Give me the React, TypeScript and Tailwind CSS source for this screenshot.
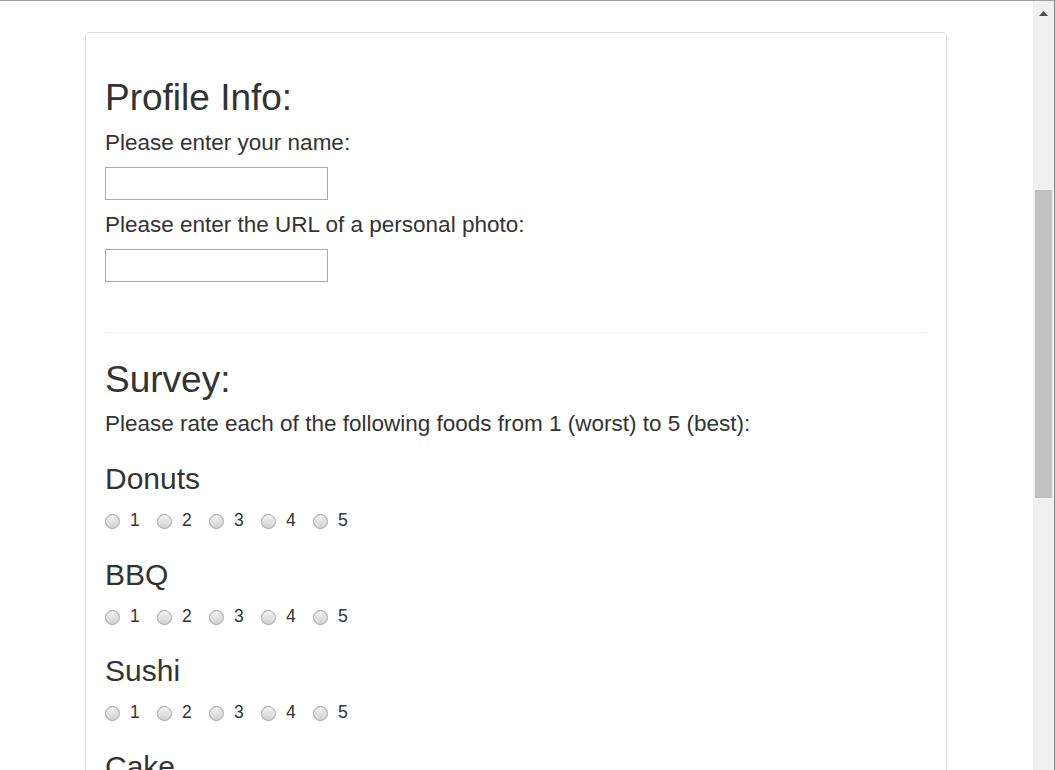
import React from "react";

const foods = ["Donuts", "BBQ", "Sushi", "Cake", "Pizza"];
const ratings = [1, 2, 3, 4, 5];

function RatingRow({ food }: { food: string }) {
  return (
    <div className="mt-[25px] first:mt-[22px]">
      <h3 className="text-[30px] leading-[33px]">{food}</h3>
      <div className="mt-[13px] flex h-[25px] text-[17.5px] leading-[25px]">
        {ratings.map((n) => (
          <label key={n} className="flex w-[52px] items-start">
            <span
              role="radio"
              aria-checked="false"
              className="mt-[6px] block h-[15px] w-[15px] shrink-0 rounded-full border border-[#a3a3a3] bg-linear-to-b from-[#f3f3f3] to-[#d2d2d2]"
            />
            <span className="ml-[10px]">{n}</span>
          </label>
        ))}
      </div>
    </div>
  );
}

function Scrollbar() {
  return (
    <div className="flex w-[22px] shrink-0">
      <div className="flex w-[21px] flex-col bg-[#f0f0f0]">
        <div className="flex h-[25px] items-center justify-center">
          <svg width="9" height="5" viewBox="0 0 9 5">
            <path d="M4.5 0 L9 5 L0 5 Z" fill="#505050" />
          </svg>
        </div>
        <div className="mx-[2px] mt-[164px] h-[308px] bg-[#c1c1c1]" />
      </div>
      <div className="w-px bg-[#8a8a8a]" />
    </div>
  );
}

export default function App() {
  return (
    <div className="flex h-[770px] flex-col overflow-hidden bg-white font-['Liberation_Sans',Arial,sans-serif] text-[#333]">
      <div className="h-px shrink-0 bg-[#a0a0a0]" />
      <div className="flex min-h-0 flex-1">
        <main className="min-w-0 flex-1 overflow-hidden pt-[31px]">
          <div className="ml-[85px] w-[862px] rounded-[4px] border border-[#ddd] px-[19px] pt-[44px] pb-10">
            <section>
              <h2 className="text-[37px] leading-[41px]">Profile Info:</h2>
              <p className="mt-[9px] text-[22.5px] leading-[32px]">Please enter your name:</p>
              <input
                type="text"
                className="mt-[8px] block h-[33px] w-[223px] border border-[#a9a9a9] bg-white px-1 outline-none"
              />
              <p className="mt-[9px] text-[22.5px] leading-[32px]">
                Please enter the URL of a personal photo:
              </p>
              <input
                type="text"
                className="mt-[8px] block h-[33px] w-[223px] border border-[#a9a9a9] bg-white px-1 outline-none"
              />
            </section>

            <hr className="mt-[50px] border-t border-[#eee]" />

            <section>
              <h2 className="mt-[26px] text-[37px] leading-[41px]">Survey:</h2>
              <p className="mt-[8px] text-[22.5px] leading-[32px]">
                Please rate each of the following foods from 1 (worst) to 5 (best):
              </p>
              <div>
                {foods.map((food) => (
                  <RatingRow key={food} food={food} />
                ))}
              </div>
            </section>
          </div>
        </main>
        <Scrollbar />
      </div>
    </div>
  );
}
